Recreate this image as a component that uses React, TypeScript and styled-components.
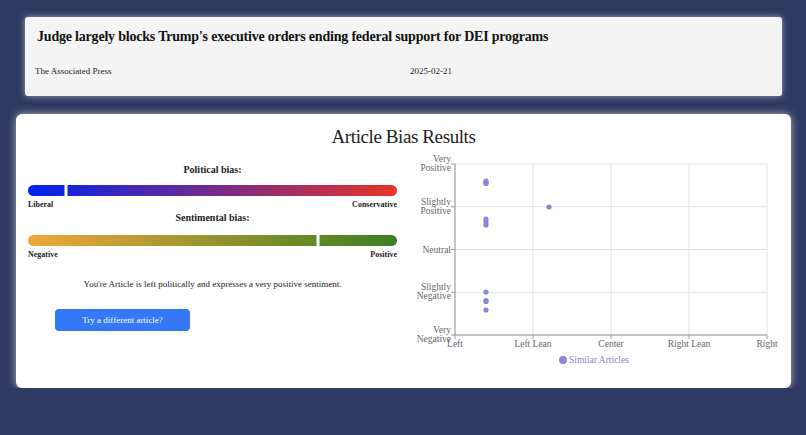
import { createGlobalStyle, styled } from 'styled-components'

const GlobalStyle = createGlobalStyle`
  html, body {
    margin: 0;
    padding: 0;
    background: #2f3a62;
    font-family: "Liberation Serif", "Times New Roman", serif;
  }
`

const Page = styled.div`
  display: flex;
  flex-direction: column;
  padding: 17px 15px 0 16px;
  gap: 18px;
`

const ArticleCard = styled.div`
  margin: 0 9px 0 9px;
  height: 79px;
  box-sizing: border-box;
  background: #f4f4f4;
  border-radius: 3px;
  box-shadow: 0 0 6px rgba(255, 255, 255, 0.55);
  padding: 10px 10px 0 10px;
`

const ArticleTitle = styled.h2`
  margin: 0 0 0 2px;
  font-size: 14px;
  letter-spacing: -0.2px;
  font-weight: 700;
  color: #111;
  line-height: 20px;
`

const ArticleMeta = styled.div`
  display: grid;
  grid-template-columns: 375px 1fr;
  margin-top: 19px;
  font-size: 9px;
  color: #222;
`

const ResultsCard = styled.div`
  height: 274px;
  box-sizing: border-box;
  background: #fff;
  border-radius: 6px;
  box-shadow: 0 0 8px rgba(255, 255, 255, 0.6);
  padding: 11px 12px 0 12px;
`

const ResultsTitle = styled.h1`
  margin: 0;
  text-align: center;
  font-size: 19px;
  letter-spacing: -0.4px;
  font-weight: 400;
  line-height: 23px;
  color: #222;
`

const Columns = styled.div`
  display: flex;
  align-items: flex-start;
`

const BiasColumn = styled.div`
  width: 369px;
  flex-shrink: 0;
  display: flex;
  flex-direction: column;
  padding-top: 16px;
`

const BiasHeading = styled.div<{ $gap?: number }>`
  text-align: center;
  font-size: 10px;
  font-weight: 700;
  color: #222;
  line-height: 12px;
  margin-top: ${({ $gap }) => $gap ?? 0}px;
`

const Bar = styled.div<{ $from: string; $to: string; $gap?: number }>`
  position: relative;
  height: 11px;
  border-radius: 6px;
  margin-top: ${({ $gap }) => $gap ?? 9}px;
  background: linear-gradient(to right, ${({ $from }) => $from}, ${({ $to }) => $to});
`

const Marker = styled.span`
  position: absolute;
  top: 0;
  width: 3px;
  height: 11px;
  background: #fff;
  transform: translateX(-50%);
`

const BarLabels = styled.div`
  display: flex;
  justify-content: space-between;
  font-size: 8px;
  font-weight: 700;
  color: #222;
  margin-top: 4px;
  line-height: 10px;
`

const Summary = styled.p`
  margin: 19px 0 0 0;
  text-align: center;
  font-size: 9px;
  color: #222;
`

const RetryButton = styled.button`
  margin: 20px 0 0 27px;
  width: 135px;
  height: 22px;
  border: none;
  border-radius: 4px;
  background: #3478f6;
  color: #fff;
  font-family: inherit;
  font-size: 9px;
  cursor: pointer;
`

const ChartWrap = styled.div`
  margin-left: 18px;
  margin-top: 3px;

  svg {
    overflow: visible;
    display: block;
  }
`

const PURPLE = '#8884d8'

const xTicks = ['Left', 'Left Lean', 'Center', 'Right Lean', 'Right']
const yTicks: string[][] = [
  ['Very', 'Positive'],
  ['Slightly', 'Positive'],
  ['Neutral'],
  ['Slightly', 'Negative'],
  ['Very', 'Negative'],
]

// plot area inside the svg
const L = 40
const R = 352
const T = 13
const B = 184

const points: [number, number][] = [
  [71, 30], [71, 31.5], [71, 32.5],
  [71, 68], [71, 71], [71, 74],
  [134, 56],
  [71, 141], [71, 149.5], [71, 150.5], [71, 159],
]

const BiasChart = () => {
  const colW = (R - L) / 4
  const rowH = (B - T) / 4
  return (
    <svg width={362} height={220} fontFamily='"Liberation Serif", serif'>
      {xTicks.map((_, i) => (
        <line key={`gx${i}`} x1={L + i * colW} x2={L + i * colW} y1={T} y2={B} stroke="#e2e2e2" />
      ))}
      {yTicks.map((_, i) => (
        <line key={`gy${i}`} x1={L} x2={R} y1={T + i * rowH} y2={T + i * rowH} stroke="#e2e2e2" />
      ))}
      <line x1={L} x2={L} y1={T} y2={B} stroke="#999" />
      <line x1={L} x2={R} y1={B} y2={B} stroke="#999" />
      {yTicks.map((label, i) => {
        const y = T + i * rowH
        return (
          <g key={`ty${i}`}>
            <line x1={L - 4} x2={L} y1={y} y2={y} stroke="#999" />
            <text textAnchor="end" fontSize={9.5} fill="#666" x={L - 4}>
              {label.length === 1 ? (
                <tspan x={L - 4} y={y + 3}>{label[0]}</tspan>
              ) : (
                <>
                  <tspan x={L - 4} y={y - 2}>{label[0]}</tspan>
                  <tspan x={L - 4} y={y + 7}>{label[1]}</tspan>
                </>
              )}
            </text>
          </g>
        )
      })}
      {xTicks.map((label, i) => (
        <g key={`tx${i}`}>
          <line x1={L + i * colW} x2={L + i * colW} y1={B} y2={B + 4} stroke="#999" />
          <text x={L + i * colW} y={B + 12} textAnchor="middle" fontSize={9.5} fill="#666">
            {label}
          </text>
        </g>
      ))}
      {points.map(([x, y], i) => (
        <circle key={i} cx={x} cy={y} r={2.6} fill={PURPLE} />
      ))}
      <circle cx={148} cy={209} r={4} fill={PURPLE} />
      <text x={154} y={212} fontSize={9.5} fill={PURPLE}>Similar Articles</text>
    </svg>
  )
}

export default function App() {
  return (
    <>
      <GlobalStyle />
      <Page>
        <ArticleCard>
          <ArticleTitle>Judge largely blocks Trump's executive orders ending federal support for DEI programs</ArticleTitle>
          <ArticleMeta>
            <span>The Associated Press</span>
            <span>2025-02-21</span>
          </ArticleMeta>
        </ArticleCard>
        <ResultsCard>
          <ResultsTitle>Article Bias Results</ResultsTitle>
          <Columns>
            <BiasColumn>
              <BiasHeading>Political bias:</BiasHeading>
              <Bar $from="#0022f0" $to="#e83428">
                <Marker style={{ left: '10.3%' }} />
              </Bar>
              <BarLabels>
                <span>Liberal</span>
                <span>Conservative</span>
              </BarLabels>
              <BiasHeading $gap={2}>Sentimental bias:</BiasHeading>
              <Bar $from="#f0a83a" $to="#3c7f22" $gap={11}>
                <Marker style={{ left: '78.5%' }} />
              </Bar>
              <BarLabels>
                <span>Negative</span>
                <span>Positive</span>
              </BarLabels>
              <Summary>You're Article is left politically and expresses a very positive sentiment.</Summary>
              <RetryButton>Try a different article?</RetryButton>
            </BiasColumn>
            <ChartWrap>
              <BiasChart />
            </ChartWrap>
          </Columns>
        </ResultsCard>
      </Page>
    </>
  )
}
